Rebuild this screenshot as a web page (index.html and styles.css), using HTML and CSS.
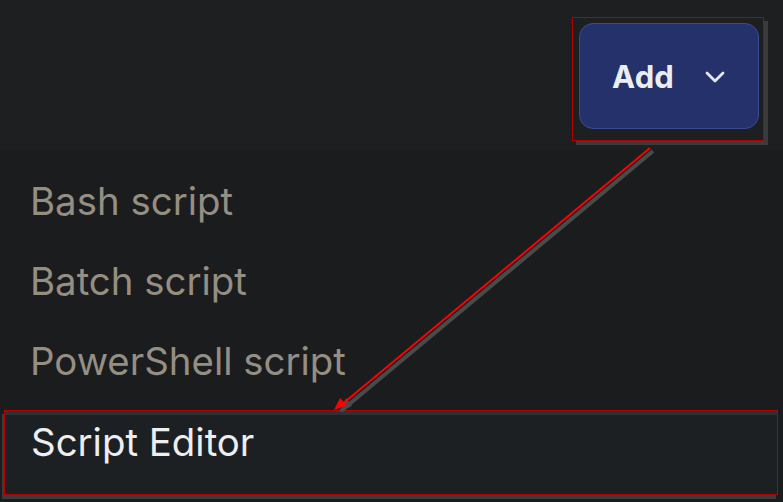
FILE: index.html
```html
<!DOCTYPE html>
<html>
<head>
<meta charset="utf-8">
<link rel="stylesheet" href="styles.css">
</head>
<body>
<div class="page">
  <header class="toolbar">
    <div class="add-wrap">
      <button class="add-btn"><span class="add-label">Add</span>
        <svg class="chev" width="24" height="16" viewBox="0 0 24 16"><path d="M4 4 L12 12 L20 4" fill="none" stroke="#e6e7ee" stroke-width="2.8" stroke-linecap="round" stroke-linejoin="round"/></svg>
      </button>
      <div class="mark-box"></div>
    </div>
  </header>
  <ul class="menu">
    <li class="item">Bash script</li>
    <li class="item">Batch script</li>
    <li class="item">PowerShell script</li>
    <li class="item selected">Script Editor</li>
  </ul>
  <svg class="arrow" width="783" height="502" viewBox="0 0 783 502">
    <line x1="653" y1="151" x2="341" y2="411" stroke="#4a4a4a" stroke-width="4"/>
    <polygon points="339,412 346,398 352,406" fill="#4a4a4a"/>
    <line x1="650" y1="148" x2="340" y2="406" stroke="#ff0000" stroke-width="2"/>
    <polygon points="334,410 340,398 347,405" fill="#ff0000"/>
  </svg>
</div>
</body>
</html>
```
FILE: styles.css
```css
* { box-sizing: border-box; }
html, body { margin: 0; padding: 0; }
body {
  background: #1e1f21;
  font-family: Inter, "Noto Sans", sans-serif;
  width: 783px;
  height: 502px;
  overflow: hidden;
}
.page { position: relative; width: 783px; height: 502px; }
.toolbar {
  height: 150px;
  display: flex;
  justify-content: flex-end;
  align-items: flex-start;
  padding: 23px 24px 0 0;
  background: #1e1f21;
}
.add-wrap { position: relative; }
.add-btn {
  width: 180px;
  height: 106px;
  background: #25316a;
  border: 1px solid #3a4a90;
  border-radius: 14px;
  display: flex;
  align-items: center;
  padding: 0 0 0 32px;
  gap: 29px;
  color: #ecedf2;
  font-family: Inter, "Noto Sans", sans-serif;
  font-weight: 700;
  font-size: 31px;
}
.add-label { letter-spacing: 0.2px; }
.chev { margin-top: 2px; }
.mark-box {
  position: absolute;
  left: -7px; top: -6px; right: -5px; bottom: -12px;
  border: 1.5px solid #b30000;
  box-shadow: 4px 4px 0 #3b3b3b;
}
.menu {
  list-style: none;
  margin: 0;
  padding: 11px 0 0 0;
  background: #1b1c1e;
  height: 352px;
}
.item {
  font-size: 38.4px;
  line-height: 80px;
  color: #958e83;
  padding-left: 30px;
}
.item.selected {
  margin: 9px 5px 0 4px;
  height: 85px;
  line-height: 62px;
  padding-left: 26px;
  color: #eceef0;
  background: #1d2022;
  border: 1px solid #b30000;
  box-shadow: inset 0 4px 0 #2e3133, -2px 4px 0 #3b3b3b;
}
.arrow { position: absolute; left: 0; top: 0; pointer-events: none; }
```
